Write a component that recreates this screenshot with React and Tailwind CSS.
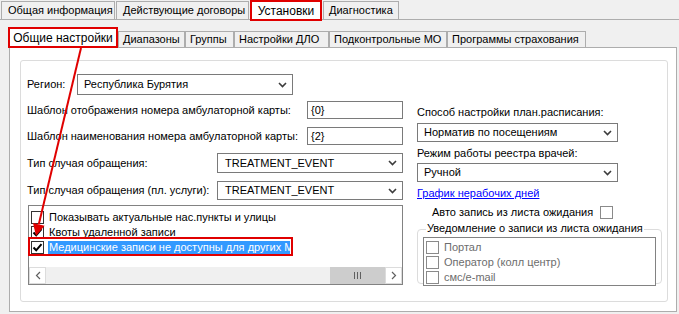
import React from 'react';

// small helpers for the WinForms look
const Chevron = () => (
    <svg width="9" height="6" viewBox="0 0 9 6" className="shrink-0">
        <path d="M1 1 L4.5 4.5 L8 1" fill="none" stroke="#3c3c3c" strokeWidth="1.6" />
    </svg>
);

function Combo({ value, className }) {
    return (
        <div className={`flex items-center justify-between bg-white border border-[#7a7a7a] pl-[6px] pr-[5px] ${className}`}>
            <span>{value}</span>
            <Chevron />
        </div>
    );
}

function Check({ checked, gray }) {
    return (
        <div className={`w-[13px] h-[13px] shrink-0 bg-white border flex items-center justify-center ${gray ? 'border-[#8a8a8a]' : 'border-[#333333]'}`}>
            {checked && (
                <svg width="11" height="11" viewBox="0 0 11 11">
                    <path d="M1.5 5.5 L4.2 8.3 L9.5 2.2" fill="none" stroke="#000" strokeWidth="2" />
                </svg>
            )}
        </div>
    );
}

const topTabs = [
    { label: 'Общая информация', w: 'w-[114px]' },
    { label: 'Действующие договоры', w: 'w-[133px]' },
];

const subTabs = [
    { label: 'Диапазоны', w: 'w-[67px]' },
    { label: 'Группы', w: 'w-[49px]' },
    { label: 'Настройки ДЛО', w: 'w-[95px]' },
    { label: 'Подконтрольные МО', w: 'w-[118px]' },
    { label: 'Программы страхования', w: 'w-[139px]' },
];

export default function App() {
    return (
        <div className="relative w-[679px] h-[314px] overflow-hidden bg-[#f0f0f0] text-[11px] text-black font-['Liberation_Sans',Arial,sans-serif] leading-none">
            {/* верхние вкладки */}
            <div className="flex items-end h-[20px] border-b border-[#adadad] pl-[1px]">
                {topTabs.map((t) => (
                    <div key={t.label} className={`h-[18px] ${t.w} mr-[1px] border border-b-0 border-[#adadad] flex items-center pl-[6px]`}>
                        {t.label}
                    </div>
                ))}
                <div className="relative z-10 h-[21px] w-[72px] mb-[-2px] bg-white border-2 border-[#e00000] flex items-center justify-center text-[12px]">
                    Установки
                </div>
                <div className="h-[18px] w-[76px] ml-[1px] border border-b-0 border-[#adadad] flex items-center pl-[5px]">
                    Диагностика
                </div>
            </div>

            {/* вложенные вкладки */}
            <div className="flex items-end h-[27px] pl-[8px]">
                <div className="relative z-10 h-[21px] w-[110px] mb-[-1px] bg-white border-2 border-[#e00000] flex items-center justify-center text-[12px]">
                    Общие настройки
                </div>
                {subTabs.map((t) => (
                    <div key={t.label} className={`h-[16px] ${t.w} border border-b-0 border-[#adadad] flex items-center pl-[4px]`}>
                        {t.label}
                    </div>
                ))}
            </div>

            {/* панель */}
            <div className="ml-[9px] w-[668px] h-[265px] border border-[#adadad] bg-white pt-[12px] pl-[10px]">
                <div className="w-[648px] h-[242px] border border-[#dcdcdc] rounded-[3px] pt-[13px] pl-[6px] flex">
                    {/* левая колонка */}
                    <div className="w-[376px] flex flex-col">
                        <div className="flex items-center h-[21px]">
                            <span className="w-[50px]">Регион:</span>
                            <Combo value="Республика Бурятия" className="w-[216px] h-[21px]" />
                        </div>
                        <div className="flex items-center h-[18px] mt-[6px]">
                            <span className="w-[280px]">Шаблон отображения номера амбулаторной карты:</span>
                            <div className="w-[96px] h-[18px] border border-[#7a7a7a] flex items-center pl-[3px]">{'{0}'}</div>
                        </div>
                        <div className="flex items-center h-[18px] mt-[8px]">
                            <span className="w-[280px]">Шаблон наименования номера амбулаторной карты:</span>
                            <div className="w-[96px] h-[18px] border border-[#7a7a7a] flex items-center pl-[3px]">{'{2}'}</div>
                        </div>
                        <div className="flex items-center h-[20px] mt-[8px]">
                            <span className="w-[190px]">Тип случая обращения:</span>
                            <Combo value="TREATMENT_EVENT" className="w-[186px] h-[20px] pl-[7px]" />
                        </div>
                        <div className="flex items-center h-[19px] mt-[8px]">
                            <span className="w-[190px]">Тип случая обращения (пл. услуги):</span>
                            <Combo value="TREATMENT_EVENT" className="w-[186px] h-[19px] pl-[7px]" />
                        </div>

                        {/* список с флажками */}
                        <div className="mt-[5px] ml-[1px] w-[375px] h-[80px] border border-[#828282] flex flex-col">
                            <div className="pt-[4px] flex flex-col">
                                <div className="flex items-center h-[15px] pl-[2px]">
                                    <Check />
                                    <span className="ml-[5px]">Показывать актуальные нас.пункты и улицы</span>
                                </div>
                                <div className="flex items-center h-[15px] pl-[2px]">
                                    <Check checked />
                                    <span className="ml-[5px]">Квоты удаленной записи</span>
                                </div>
                                <div className="relative flex items-center h-[15px] pl-[2px]">
                                    <Check checked />
                                    <span className="ml-[4px] w-[242px] h-[14px] bg-[#3399ff] text-white pl-[1px] flex items-center whitespace-nowrap overflow-hidden">
                                        Медицинские записи не доступны для других МО
                                    </span>
                                    <div className="absolute left-[-1px] top-[-3px] w-[265px] h-[19px] border-2 border-[#e00000]" />
                                </div>
                            </div>
                            <div className="mt-auto flex h-[17px] bg-[#f0f0f0]">
                                <div className="w-[17px] h-[17px] bg-white border border-[#dcdcdc] flex items-center justify-center">
                                    <svg width="6" height="9" viewBox="0 0 6 9"><path d="M5 1 L1.5 4.5 L5 8" fill="none" stroke="#606060" strokeWidth="1.2" /></svg>
                                </div>
                                <div className="flex-1 flex justify-end">
                                    <div className="w-[55px] h-[17px] bg-[#cdcdcd] flex items-center justify-center gap-[2px]">
                                        <div className="w-[1px] h-[7px] bg-[#606060]" />
                                        <div className="w-[1px] h-[7px] bg-[#606060]" />
                                        <div className="w-[1px] h-[7px] bg-[#606060]" />
                                    </div>
                                </div>
                                <div className="w-[17px] h-[17px] bg-white border border-[#dcdcdc] flex items-center justify-center">
                                    <svg width="6" height="9" viewBox="0 0 6 9"><path d="M1 1 L4.5 4.5 L1 8" fill="none" stroke="#606060" strokeWidth="1.2" /></svg>
                                </div>
                            </div>
                        </div>
                    </div>

                    {/* правая колонка */}
                    <div className="ml-[14px] w-[245px] flex flex-col">
                        <div className="mt-[30px] h-[16px] flex items-center">Способ настройки план.расписания:</div>
                        <Combo value="Норматив по посещениям" className="mt-[3px] w-[201px] h-[19px]" />
                        <div className="mt-[3px] h-[16px] flex items-center">Режим работы реестра врачей:</div>
                        <Combo value="Ручной" className="mt-[2px] w-[201px] h-[19px]" />
                        <div className="mt-[3px] h-[16px] flex items-center">
                            <span className="text-[#0000ff] underline">График нерабочих дней</span>
                        </div>
                        <div className="mt-[3px] h-[16px] flex items-center pl-[15px]">
                            <span className="w-[168px]">Авто запись из листа ожидания</span>
                            <Check gray />
                        </div>
                        <div className="relative mt-[9px] w-[245px] h-[55px] border border-[#dcdcdc] rounded-[4px]">
                            <span className="absolute top-[-7px] left-[8px] bg-white px-[1px]">Уведомление о записи из листа ожидания</span>
                            <div className="mt-[7px] ml-[5px] w-[233px] h-[49px] border border-[#828282] bg-white pt-[2px] flex flex-col text-[#6d6d6d]">
                                {['Портал', 'Оператор (колл центр)', 'смс/e-mail'].map((s) => (
                                    <div key={s} className="flex items-center h-[15px] pl-[2px]">
                                        <Check gray />
                                        <span className="ml-[5px]">{s}</span>
                                    </div>
                                ))}
                            </div>
                        </div>
                    </div>
                </div>
            </div>

            {/* красная стрелка-указатель */}
            <svg className="absolute left-0 top-0 pointer-events-none z-20" width="679" height="314">
                <line x1="81" y1="48" x2="38.8" y2="224.3" stroke="#e00000" strokeWidth="2" />
                <polygon points="36,236 44.6,225.7 33,222.9" fill="#e00000" />
            </svg>
        </div>
    );
}
